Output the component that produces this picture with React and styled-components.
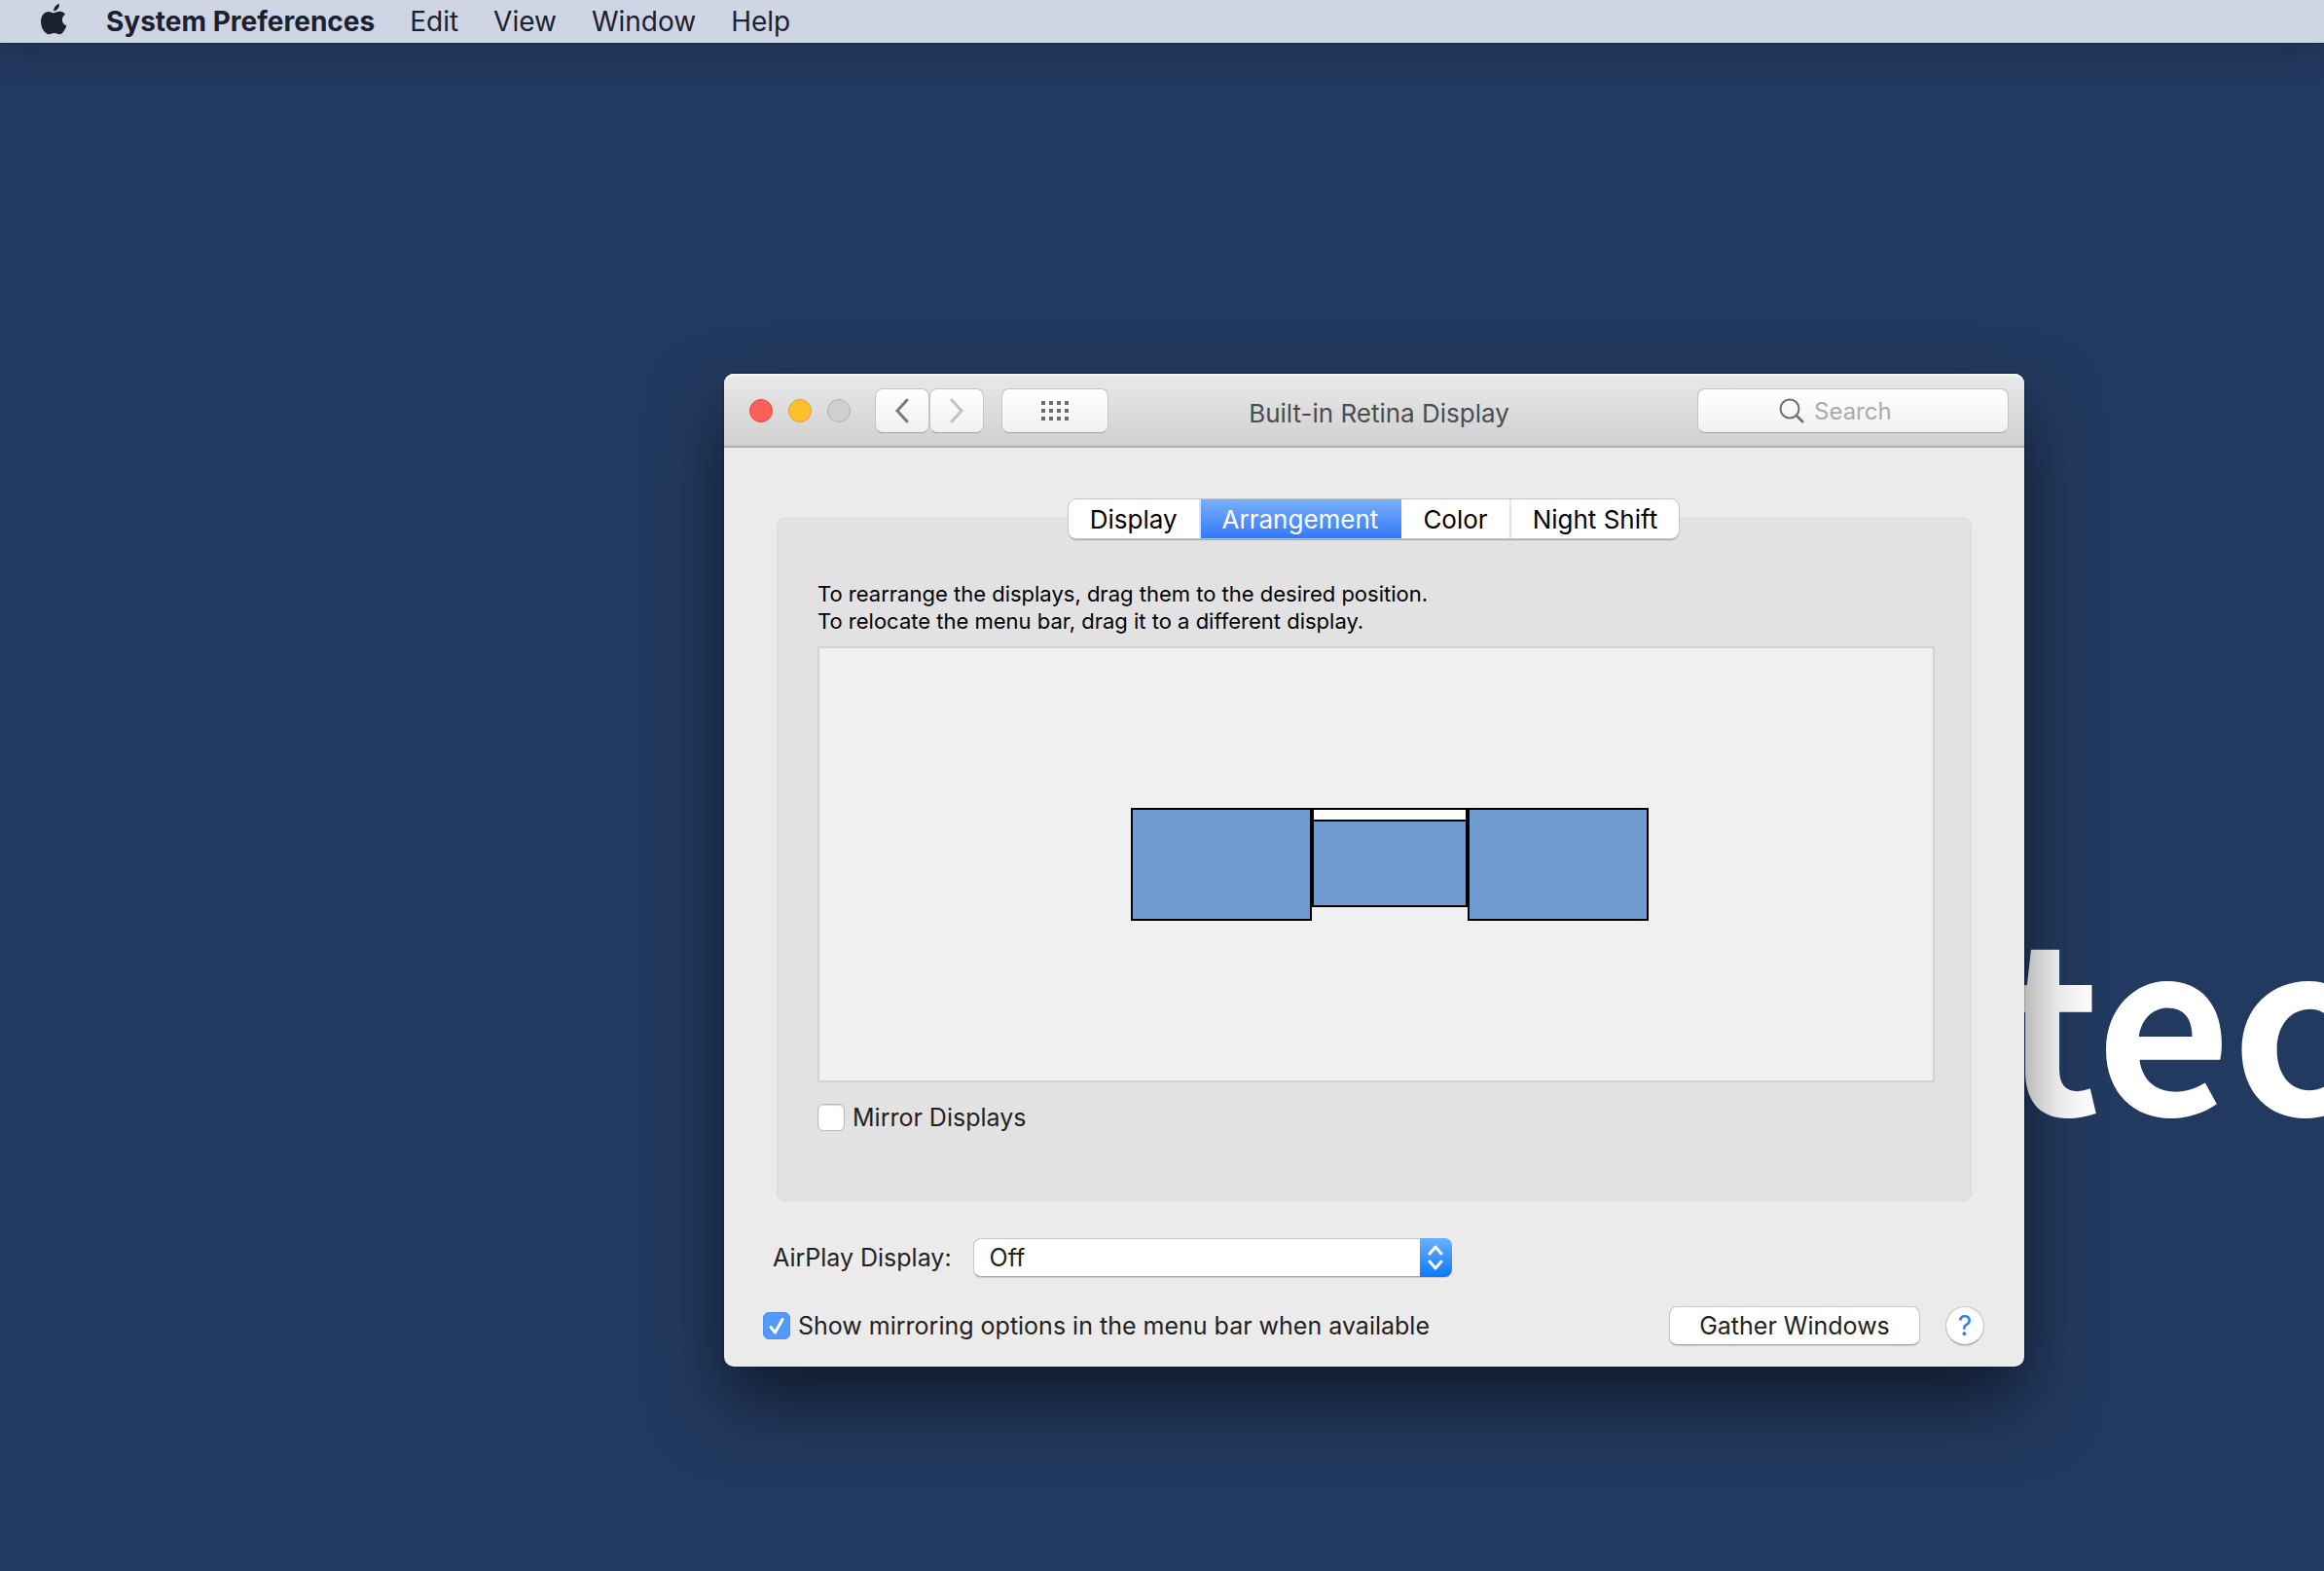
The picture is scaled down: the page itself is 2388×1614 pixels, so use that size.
import React, { useState } from "react";
import styled, { createGlobalStyle } from "styled-components";

const GlobalStyle = createGlobalStyle`
  * {
    box-sizing: border-box;
  }
  body {
    margin: 0;
    font-family: Inter, "Liberation Sans", sans-serif;
    font-size: 25px;
    color: #222222;
  }
  button,
  input,
  select {
    font: inherit;
    color: inherit;
  }
`;

const Desktop = styled.main`
  position: relative;
  display: flex;
  flex-direction: column;
  min-height: 100vh;
  overflow: hidden;
  background-color: #233a60;
`;

const MenuBar = styled.nav`
  display: flex;
  align-items: center;
  gap: 36px;
  height: 44px;
  padding: 0 42px;
  background-color: #ced5e3;
  box-shadow: 0 1px 0 #1a2b49, 0 4px 36px rgba(20, 30, 40, 0.45);
  color: #1b2130;
`;

const AppleButton = styled.button`
  display: flex;
  margin: 0 4px 4px 0;
  padding: 0;
  border: none;
  background: none;
`;

const MenuItem = styled.button`
  padding: 0;
  border: none;
  background: none;
  font-size: 28px;
  line-height: 44px;
  font-weight: ${(props) => (props.$bold ? 700 : 400)};
`;

const Wallpaper = styled.div`
  position: absolute;
  top: 852px;
  left: 2057px;
  font-family: "Noto Sans CJK SC", "Noto Sans", sans-serif;
  font-size: 240px;
  line-height: 380px;
  font-weight: 700;
  color: #ffffff;
`;

const Window = styled.section`
  position: absolute;
  top: 384px;
  left: 744px;
  right: 308px;
  min-width: 1160px;
  border-radius: 10px;
  background-color: #ebebeb;
  box-shadow: 0 0 2px rgba(0, 0, 0, 0.5), 0 36px 76px rgba(0, 0, 0, 0.55);
`;

const TitleBar = styled.header`
  display: grid;
  grid-template-columns: 1fr auto 1fr;
  align-items: center;
  height: 76px;
  padding: 2px 16px 0 26px;
  border-bottom: 2px solid #b0b0b0;
  border-radius: 10px 10px 0 0;
  background-image: linear-gradient(#e9e9e9, #d0d0d0);
  box-shadow: inset 0 2px 0 #f5f5f5;
`;

const Controls = styled.div`
  display: flex;
  align-items: center;
`;

const Light = styled.button`
  width: 24px;
  height: 24px;
  margin-right: 16px;
  padding: 0;
  border: 1px solid ${(props) => props.$border};
  border-radius: 50%;
  background-color: ${(props) => props.$color};
`;

const ToolButton = styled.button`
  display: flex;
  align-items: center;
  justify-content: center;
  width: ${(props) => props.$width}px;
  height: 46px;
  margin-left: ${(props) => props.$gap}px;
  padding: 0;
  border: 1px solid #c4c4c4;
  border-bottom-color: #a4a4a4;
  border-radius: 8px;
  background-image: linear-gradient(#ffffff, #f1f1f1);
`;

const Title = styled.h1`
  margin: 0;
  padding-top: 4px;
  font-size: 26px;
  font-weight: 400;
  color: #4c4c4c;
`;

const SearchBox = styled.label`
  display: flex;
  align-items: center;
  justify-content: center;
  justify-self: end;
  gap: 10px;
  width: 320px;
  height: 46px;
  border: 1px solid #c4c4c4;
  border-bottom-color: #a4a4a4;
  border-radius: 8px;
  background-image: linear-gradient(#ffffff, #f1f1f1);
`;

const SearchInput = styled.input`
  width: 116px;
  padding: 0;
  border: none;
  outline: none;
  background: none;
  font-size: 24px;

  &::placeholder {
    color: #aaaaaa;
    opacity: 1;
  }
`;

const Body = styled.div`
  display: flex;
  flex-direction: column;
  padding: 53px 41px 22px 40px;
`;

const Tabs = styled.div`
  position: relative;
  z-index: 1;
  display: flex;
  align-self: center;
  margin-bottom: -21px;
  border-radius: 8px;
  background-color: #ffffff;
  box-shadow: 0 0 0 1px #c6c6c6, 0 2px 1px #a6a6a6;
`;

const Tab = styled.button`
  height: 40px;
  padding: 0 22px;
  border: none;
  border-right: 2px solid #e2e2e2;
  background: none;
  font-size: 26px;
  color: #000000;

  &:last-child {
    border-right: none;
  }

  &[aria-selected="true"] {
    border-color: transparent;
    background-image: linear-gradient(#78b0f8, #3478fa);
    background-clip: border-box;
    background-origin: border-box;
    color: #ffffff;
  }
`;

const Group = styled.div`
  margin: 0 13px 0 14px;
  padding: 63px 37px 71px 41px;
  border: 1px solid #dadada;
  border-radius: 8px;
  background-color: #e2e2e2;
`;

const Hint = styled.p`
  margin: 0 0 12px;
  font-size: 22px;
  line-height: 28px;
  color: #000000;
`;

const Arrangement = styled.div`
  position: relative;
  height: 448px;
  margin-bottom: 22px;
  border: 2px solid #d2d2d2;
  background-color: #f0f0f0;
`;

const Monitor = styled.div`
  position: absolute;
  top: 164px;
  left: ${(props) => props.$left}px;
  width: ${(props) => props.$width}px;
  height: ${(props) => props.$height}px;
  border: 2px solid #000000;
  background-color: #6f9bd0;
`;

const MonitorMenuBar = styled.div`
  height: 12px;
  border-bottom: 2px solid #000000;
  background-color: #ffffff;
`;

const CheckLabel = styled.label`
  display: flex;
  align-items: center;
  gap: 8px;
  line-height: 28px;
`;

const CheckInput = styled.input`
  appearance: none;
  width: 28px;
  height: 28px;
  margin: 0;
  border: 1px solid #b9b9b9;
  border-radius: 6px;
  background-color: #ffffff;
  box-shadow: inset 0 1px 1px #d8d8d8;

  &:checked {
    border-color: #4a90f4;
    background-color: #5499f7;
    background-image: url("data:image/svg+xml,%3csvg viewBox='0 0 26 26' fill='none' stroke='white' stroke-width='3' stroke-linecap='round' stroke-linejoin='round' xmlns='http://www.w3.org/2000/svg'%3e%3cpath d='M7 14.5l4.5 5.5L19 6.500'/%3e%3c/svg%3e");
    background-size: 100% 100%;
    box-shadow: none;
  }
`;

const AirPlayRow = styled.div`
  display: flex;
  align-items: center;
  gap: 22px;
  margin: 38px 0 30px;
  padding-left: 10px;
`;

const SelectBox = styled.div`
  position: relative;
  width: 492px;
  height: 40px;
`;

const Select = styled.select`
  appearance: none;
  width: 100%;
  height: 100%;
  padding: 0 50px 0 16px;
  border: 1px solid #c6c6c6;
  border-bottom-color: #a6a6a6;
  border-radius: 8px;
  background-color: #ffffff;
  box-shadow: 0 1px 1px #cccccc;
`;

const SelectCap = styled.span`
  position: absolute;
  top: 0;
  right: 0;
  display: flex;
  align-items: center;
  justify-content: center;
  width: 33px;
  height: 40px;
  border-radius: 0 8px 8px 0;
  background-image: linear-gradient(#6bb1fa, #0a7aff);
  pointer-events: none;
`;

const Footer = styled.footer`
  display: flex;
  align-items: center;
`;

const PushButton = styled.button`
  width: 258px;
  height: 40px;
  margin-left: auto;
  padding: 0;
  border: 1px solid #c6c6c6;
  border-bottom-color: #a6a6a6;
  border-radius: 8px;
  background-color: #ffffff;
  box-shadow: 0 1px 1px #cccccc;
`;

const HelpButton = styled.button`
  width: 40px;
  height: 40px;
  margin-left: 26px;
  padding: 0;
  border: 1px solid #c6c6c6;
  border-bottom-color: #a6a6a6;
  border-radius: 50%;
  background-color: #ffffff;
  box-shadow: 0 1px 1px #cccccc;
  font-size: 28px;
  line-height: 38px;
  color: #2f7cf8;
`;

const menus = ["Edit", "View", "Window", "Help"];
const tabs = ["Display", "Arrangement", "Color", "Night Shift"];
const gridCells = [0, 8, 16, 24];

const AppleLogo = () => (
  <svg width="27" height="32" viewBox="0 0 27 32" fill="#1b2130">
    <path d="M19 0C19.200 3.900 16.200 7.300 13.200 7.300 12.900 3.800 16 .500 19 0z" />
    <path d="M13.400 9.300c1.500 0 3.300-1.500 6-1.500 2.300 0 4.400 1.100 5.700 3-4.800 3-4 9.700 1.200 11.700-1 2.900-3.800 8.700-6.800 8.700-2.100 0-3-1.300-5.900-1.300s-3.600 1.300-5.500 1.300C4.300 31.200 0 24.600 0 18.200 0 11.800 3.800 7.900 7.800 7.900c2.300 0 4.100 1.400 5.600 1.400z" />
  </svg>
);

const App = () => {
  const [activeTab, setActiveTab] = useState("Arrangement");
  const [mirror, setMirror] = useState(false);
  const [showOptions, setShowOptions] = useState(true);

  return (
    <Desktop>
      <GlobalStyle />
      <MenuBar>
        <AppleButton aria-label="Apple">
          <AppleLogo />
        </AppleButton>
        <MenuItem $bold>System Preferences</MenuItem>
        {menus.map((menu) => (
          <MenuItem key={menu}>{menu}</MenuItem>
        ))}
      </MenuBar>
      <Wallpaper>tec</Wallpaper>

      <Window>
        <TitleBar>
          <Controls>
            <Light aria-label="Close" $color="#ff5f57" $border="#e2463f" />
            <Light aria-label="Minimize" $color="#ffbf2f" $border="#dfa023" />
            <Light aria-label="Zoom" $color="#cfcfcf" $border="#b0b0b0" />
            <ToolButton aria-label="Back" $width={56} $gap={9}>
              <svg width="16" height="26" fill="none" stroke="#7b7b7b">
                <path d="M13 2L3 13l10 11" strokeWidth="3" strokeLinecap="round" />
              </svg>
            </ToolButton>
            <ToolButton aria-label="Forward" $width={56} $gap={0}>
              <svg width="16" height="26" fill="none" stroke="#c2c2c2">
                <path d="M3 2l10 11L3 24" strokeWidth="3" strokeLinecap="round" />
              </svg>
            </ToolButton>
            <ToolButton aria-label="Show All" $width={110} $gap={18}>
              <svg width="28" height="20" fill="#6b6b6b">
                {[0, 8, 16].map((y) =>
                  gridCells.map((x) => (
                    <rect key={`${x}-${y}`} x={x} y={y} width="4" height="4" />
                  ))
                )}
              </svg>
            </ToolButton>
          </Controls>
          <Title>Built-in Retina Display</Title>
          <SearchBox>
            <svg width="26" height="26" fill="none" stroke="#6e6e6e">
              <circle cx="11" cy="11" r="9.500" strokeWidth="2" />
              <path d="M18 18l7 7" strokeWidth="2.500" />
            </svg>
            <SearchInput placeholder="Search" aria-label="Search" />
          </SearchBox>
        </TitleBar>

        <Body>
          <Tabs role="tablist">
            {tabs.map((tab) => (
              <Tab
                key={tab}
                role="tab"
                aria-selected={tab === activeTab}
                onClick={() => setActiveTab(tab)}
              >
                {tab}
              </Tab>
            ))}
          </Tabs>
          <Group>
            <Hint>
              To rearrange the displays, drag them to the desired position.
              <br />
              To relocate the menu bar, drag it to a different display.
            </Hint>
            <Arrangement>
              <Monitor $left={320} $width={186} $height={116} />
              <Monitor $left={506} $width={160} $height={102}>
                <MonitorMenuBar />
              </Monitor>
              <Monitor $left={666} $width={186} $height={116} />
            </Arrangement>
            <CheckLabel>
              <CheckInput
                type="checkbox"
                checked={mirror}
                onChange={() => setMirror(!mirror)}
              />
              Mirror Displays
            </CheckLabel>
          </Group>

          <AirPlayRow>
            <label htmlFor="airplay">AirPlay Display:</label>
            <SelectBox>
              <Select id="airplay">
                <option>Off</option>
              </Select>
              <SelectCap>
                <svg width="18" height="26" fill="none" stroke="#ffffff">
                  <path
                    d="M3 9l6-7 6 7M3 17l6 7 6-7"
                    strokeWidth="3"
                    strokeLinecap="round"
                    strokeLinejoin="round"
                  />
                </svg>
              </SelectCap>
            </SelectBox>
          </AirPlayRow>

          <Footer>
            <CheckLabel>
              <CheckInput
                type="checkbox"
                checked={showOptions}
                onChange={() => setShowOptions(!showOptions)}
              />
              Show mirroring options in the menu bar when available
            </CheckLabel>
            <PushButton>Gather Windows</PushButton>
            <HelpButton aria-label="Help">?</HelpButton>
          </Footer>
        </Body>
      </Window>
    </Desktop>
  );
};

export default App;
